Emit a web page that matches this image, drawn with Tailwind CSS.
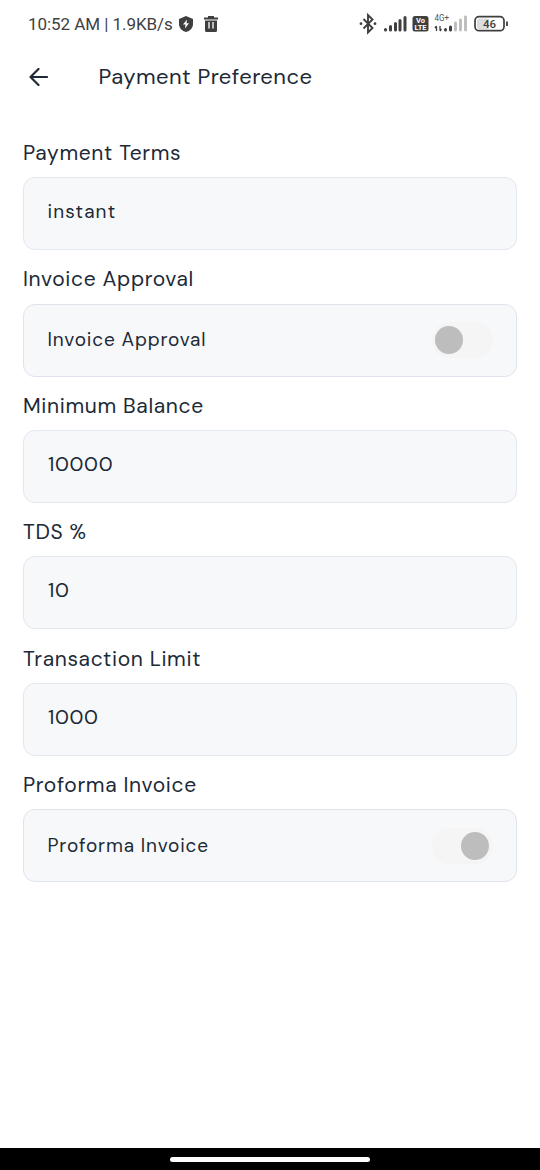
<!DOCTYPE html>
<html lang="en">
<head>
<meta charset="utf-8">
<title>Payment Preference</title>
<script src="https://cdn.jsdelivr.net/npm/@tailwindcss/browser@4"></script>
</head>
<body class="bg-white">
<div class="flex h-[1170px] w-[540px] flex-col overflow-hidden bg-white font-['DM_Sans','Inter',sans-serif] text-[#202936] [font-variation-settings:'opsz'_14]">
  <div class="flex h-12 shrink-0 items-center pl-7 font-['Roboto',sans-serif] text-[#3f3f3f]">
    <span class="w-[151px] whitespace-nowrap pt-px text-[17px] font-[450] tracking-[-0.05px]">10:52 AM | 1.9KB/s</span>
    <svg class="h-4 w-[14px]" viewBox="0 0 14 16"><path d="M7 0L14 3V8C14 12 11 15 7 16C3 15 0 12 0 8V3Z" fill="#3f3f3f"/><path d="M8 3.5L4 8.6H6.5L6 12.5L10 7.3H7.5Z" fill="#fff"/></svg>
    <svg class="ml-[11px] h-4 w-[14px]" viewBox="0 0 14 16"><path d="M0 1.5H4V0H10V1.5H14V3.5H0ZM1 4.5H13V14.5Q13 16 11.500 16H2.500Q1 16 1 14.500Z" fill="#3f3f3f"/><path d="M5 6V12.500M9 6V12.500" stroke="#fff" stroke-width="1.300"/></svg>
    <svg class="ml-[141px] h-[30px] w-[152px] shrink-0" viewBox="0 0 152 30">
      <path d="M4.500 10L13.500 19L9 23.500V6L13.500 10.500L4.500 19.500" fill="none" stroke="#3f3f3f" stroke-width="1.900"/>
      <circle cx="2" cy="14.700" r="1.400" fill="#3f3f3f"/><circle cx="16" cy="14.700" r="1.400" fill="#3f3f3f"/>
      <path d="M26.500 21V20.500M31.500 21V17.500M36.500 21V14.500M41 21V11.500M46 21V8.500" stroke="#3f3f3f" stroke-width="3" stroke-linecap="round"/>
      <rect x="53.500" y="7" width="16" height="15.500" rx="2.500" fill="#3f3f3f"/>
      <text x="61.500" y="13.800" text-anchor="middle" font-size="7.500" font-weight="700" fill="#fff">Vo</text>
      <text x="61.500" y="21" text-anchor="middle" font-size="7.500" font-weight="700" fill="#fff">LTE</text>
      <text x="75.500" y="12" font-size="9" textLength="14.500" lengthAdjust="spacingAndGlyphs" fill="#555">4G+</text>
      <path d="M77.500 22V17.500M76 19L77.500 17M81 17V21.500M82.500 20L81 22" stroke="#3f3f3f" stroke-width="1.300" fill="none"/>
      <path d="M86.500 21V20.500M91.500 21V18" stroke="#3f3f3f" stroke-width="3" stroke-linecap="round"/>
      <path d="M96.500 21V14M101.500 21V11M106.500 21V8" stroke="#bbb" stroke-width="2.800" stroke-linecap="round"/>
      <rect x="116" y="7.700" width="29" height="14" rx="4" fill="#fff" stroke="#3f3f3f" stroke-width="1.700"/>
      <path d="M120 9.500H130V20H120Q118 20 118 18V11.500Q118 9.500 120 9.500Z" fill="#ddd"/>
      <path d="M148 12.500V17" stroke="#3f3f3f" stroke-width="1.800"/>
      <text x="130.500" y="19" text-anchor="middle" font-size="11.500" font-weight="500" fill="#3f3f3f">46</text>
    </svg>
  </div>

  <header class="flex h-[57px] shrink-0 items-center pl-[29px]">
    <svg class="h-[18px] w-[19px]" viewBox="0 0 19 18" fill="none" stroke="#202936" stroke-width="2.200" stroke-linecap="round" stroke-linejoin="round"><path d="M18 9H1.500M9.500 1L1.500 9L9.500 17"/></svg>
    <h1 class="ml-[50.5px] whitespace-nowrap pb-px text-[22px] font-[440] tracking-[0.45px]">Payment Preference</h1>
  </header>

  <main class="flex flex-1 flex-col px-[23px] pt-[19.3px]">
    <section class="h-[126.4px] shrink-0">
      <h2 class="flex h-[53px] items-center pt-1.5 text-[21px] tracking-[0.65px]">Payment Terms</h2>
      <div class="flex h-[73px] items-center rounded-xl border border-[#e3e7ee] bg-[#f7f8fa] px-[23.5px] pb-[3px] text-[19px] font-[440] tracking-[1.15px]">instant</div>
    </section>
    <section class="h-[126.4px] shrink-0">
      <h2 class="flex h-[53px] items-center pt-1.5 text-[21px] tracking-[0.65px]">Invoice Approval</h2>
      <div class="flex h-[73px] items-center justify-between rounded-xl border border-[#dfe4ec] bg-[#f7f8fa] px-[23.5px] text-[19px] font-[440] tracking-[0.85px]">
        <span>Invoice Approval</span>
        <span class="flex h-9 w-[61px] items-center rounded-full bg-[#f5f5f5] pl-[3px]"><span class="h-7 w-7 rounded-full bg-[#bdbdbd]"></span></span>
      </div>
    </section>
    <section class="h-[126.4px] shrink-0">
      <h2 class="flex h-[53px] items-center pt-1.5 text-[21px] tracking-[0.65px]">Minimum Balance</h2>
      <div class="flex h-[73px] items-center rounded-xl border border-[#e3e7ee] bg-[#f7f8fa] px-[23.5px] pb-[3px] text-[19px] font-[440] tracking-[0.6px]"><span class="origin-left scale-x-[1.07]">10000</span></div>
    </section>
    <section class="h-[126.4px] shrink-0">
      <h2 class="flex h-[53px] items-center pt-1.5 text-[21px] tracking-[0.65px]">TDS %</h2>
      <div class="flex h-[73px] items-center rounded-xl border border-[#e3e7ee] bg-[#f7f8fa] px-[23.5px] pb-[3px] text-[19px] font-[440] tracking-[0.6px]"><span class="origin-left scale-x-[1.07]">10</span></div>
    </section>
    <section class="h-[126.4px] shrink-0">
      <h2 class="flex h-[53px] items-center pt-1.5 text-[21px] tracking-[0.65px]">Transaction Limit</h2>
      <div class="flex h-[73px] items-center rounded-xl border border-[#e3e7ee] bg-[#f7f8fa] px-[23.5px] pb-[3px] text-[19px] font-[440] tracking-[0.6px]"><span class="origin-left scale-x-[1.07]">1000</span></div>
    </section>
    <section class="h-[126.4px] shrink-0">
      <h2 class="flex h-[53px] items-center pt-1.5 text-[21px] tracking-[0.65px]">Proforma Invoice</h2>
      <div class="flex h-[73px] items-center justify-between rounded-xl border border-[#dfe4ec] bg-[#f7f8fa] px-[23.5px] text-[19px] font-[440] tracking-[0.85px]">
        <span>Proforma Invoice</span>
        <span class="flex h-9 w-[61px] items-center justify-end rounded-full bg-[#f5f5f5] pr-1"><span class="h-7 w-7 rounded-full bg-[#bdbdbd]"></span></span>
      </div>
    </section>
  </main>

  <footer class="flex h-[22px] shrink-0 items-center justify-center bg-black">
    <div class="h-[5px] w-[200px] rounded-full bg-white"></div>
  </footer>
</div>
</body>
</html>
